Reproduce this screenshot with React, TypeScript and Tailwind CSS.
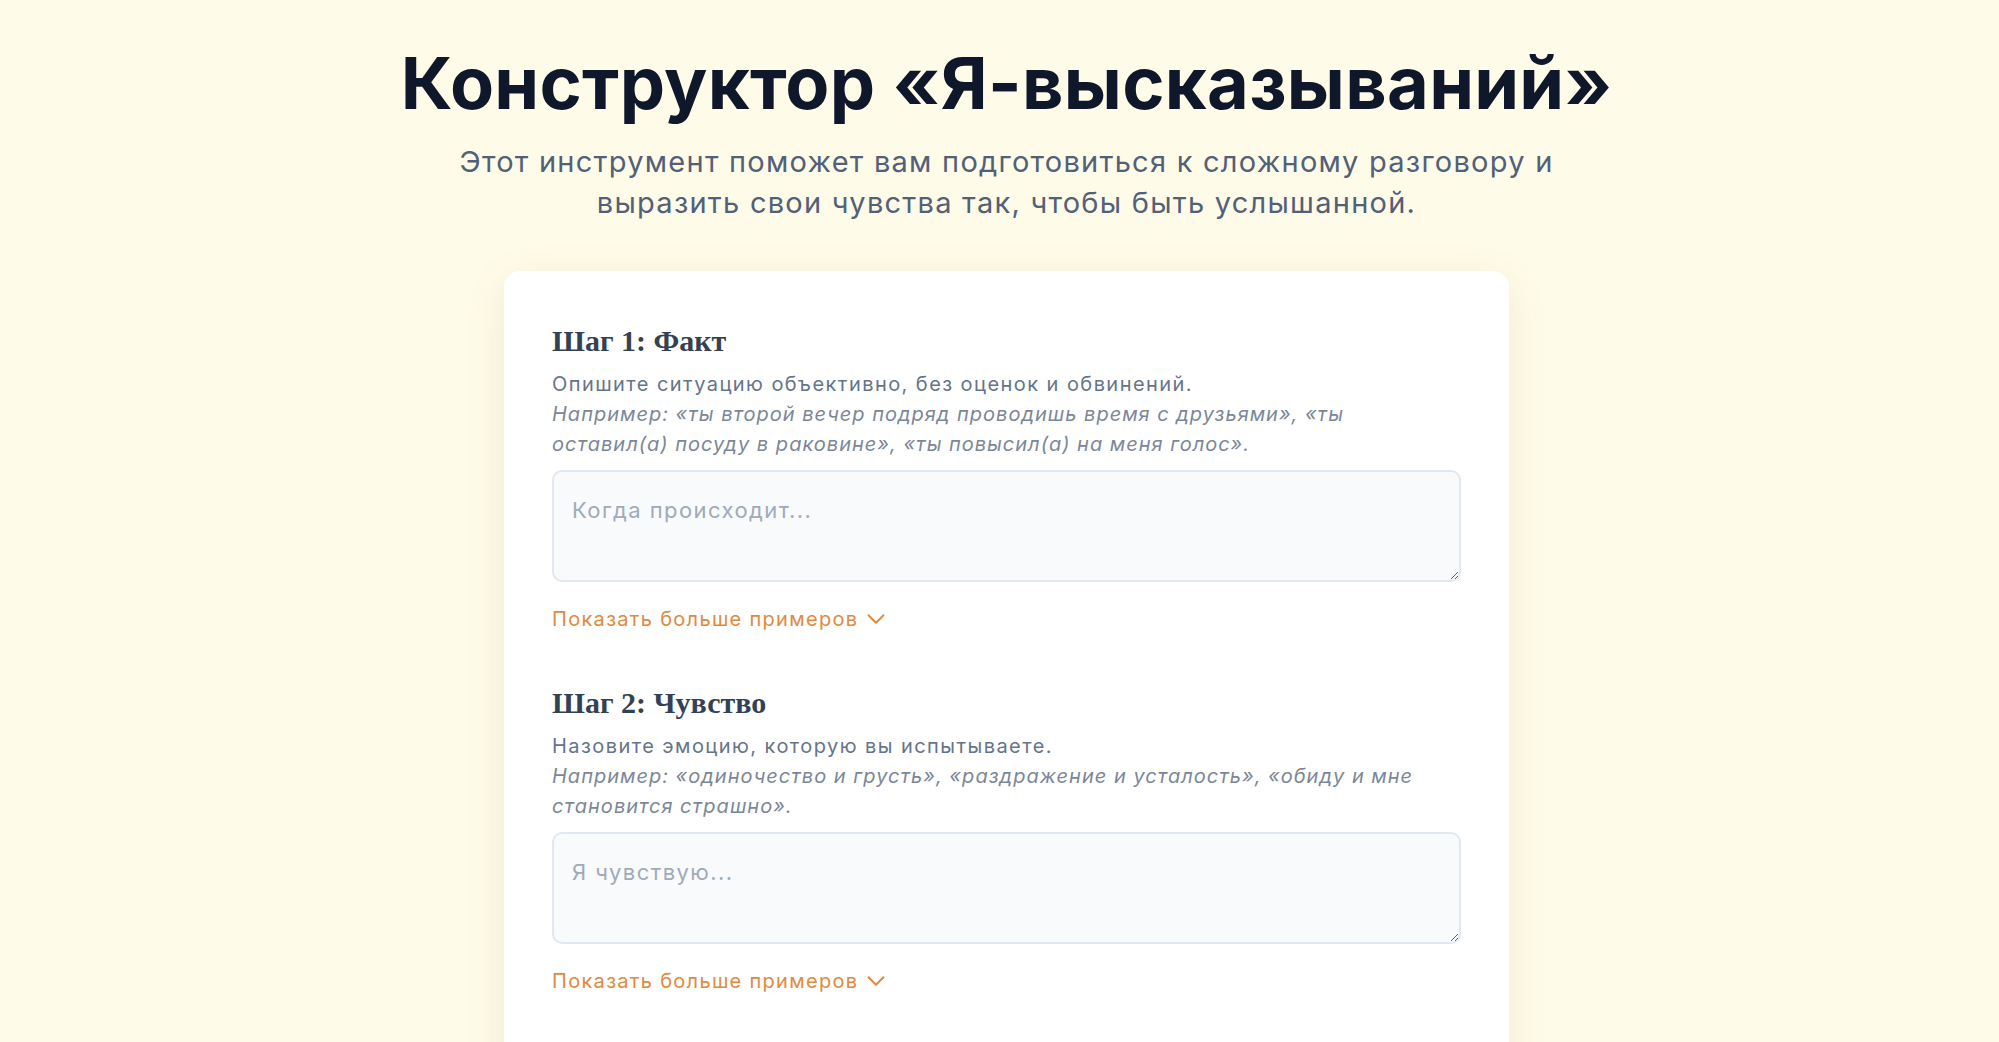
import { useState } from 'react';

const sans = { fontFamily: 'Inter, "Noto Sans", sans-serif' };

const steps = [
  {
    id: 'fact',
    title: 'Шаг 1: Факт',
    hint: 'Опишите ситуацию объективно, без оценок и обвинений.',
    example:
      'Например: «ты второй вечер подряд проводишь время с друзьями», «ты оставил(а) посуду в раковине», «ты повысил(а) на меня голос».',
    placeholder: 'Когда происходит...',
  },
  {
    id: 'feeling',
    title: 'Шаг 2: Чувство',
    hint: 'Назовите эмоцию, которую вы испытываете.',
    example:
      'Например: «одиночество и грусть», «раздражение и усталость», «обиду и мне становится страшно».',
    placeholder: 'Я чувствую...',
  },
  {
    id: 'need',
    title: 'Шаг 3: Потребность',
    hint: 'Объясните, что для вас важно и чего вам не хватает.',
    example: 'Например: «потому что мне важно проводить время вместе», «мне нужна поддержка».',
    placeholder: 'Потому что мне важно...',
  },
  {
    id: 'request',
    title: 'Шаг 4: Просьба',
    hint: 'Сформулируйте конкретную и выполнимую просьбу.',
    example: 'Например: «давай договоримся об одном вечере в неделю только для нас».',
    placeholder: 'Я прошу тебя...',
  },
];

function Chevron() {
  return (
    <svg viewBox="0 0 24 24" width="24" height="24" fill="none" stroke="currentColor" strokeWidth={2}>
      <path strokeLinecap="round" strokeLinejoin="round" d="m19.5 8.25-7.5 7.5-7.5-7.5" />
    </svg>
  );
}

export default function App() {
  const [values, setValues] = useState<Record<string, string>>({});

  return (
    <div className="min-h-screen bg-[#fefbe8] pl-[14px] pt-[47px] pb-20" style={sans}>
      {/* Header */}
      <div className="text-center">
        <h1 className="text-[72px] font-bold leading-none tracking-[0.004em] text-[#0f172a]">
          Конструктор «Я-высказываний»
        </h1>
        <p className="mt-[22px] text-[29px] leading-[41px] tracking-[0.043em] text-[#526078]">
          Этот инструмент поможет вам подготовиться к сложному разговору и
          <br />
          выразить свои чувства так, чтобы быть услышанной.
        </p>
      </div>

      {/* Card */}
      <div className="mx-auto mt-[48px] w-[1005px] rounded-2xl bg-white px-[48px] pt-[52px] pb-12 shadow-[0_10px_40px_rgba(120,100,40,0.10)]">
        <div className="flex flex-col gap-[51px]">
          {steps.map((step) => (
            <div key={step.id}>
              <h3
                className="text-[30px] font-bold leading-[36px] text-[#334155]"
                style={{ fontFamily: '"Liberation Serif", serif' }}
              >
                {step.title}
              </h3>
              <p className="mt-[10px] text-[20px] leading-[30px] tracking-[0.072em] text-[#64748b]">
                {step.hint}
                <br />
                <i className="tracking-[0.05em] text-[#7b8799]">{step.example}</i>
              </p>
              <textarea
                value={values[step.id] ?? ''}
                onChange={(e) => setValues({ ...values, [step.id]: e.target.value })}
                placeholder={step.placeholder}
                className="mt-[11px] block h-[112px] w-full rounded-[10px] border-2 border-[#e2e8f0] bg-[#f8fafc] px-[18px] pt-[21px] text-[22px] leading-[34px] tracking-[0.065em] text-[#334155] placeholder:text-[#a0aab8] focus:outline-none"
              />
              <button className="mt-[22px] flex items-center gap-[6px] text-[20px] leading-[30px] tracking-[0.065em] text-[#e08a3e]">
                <span>Показать больше примеров</span>
                <Chevron />
              </button>
            </div>
          ))}
        </div>
      </div>
    </div>
  );
}
